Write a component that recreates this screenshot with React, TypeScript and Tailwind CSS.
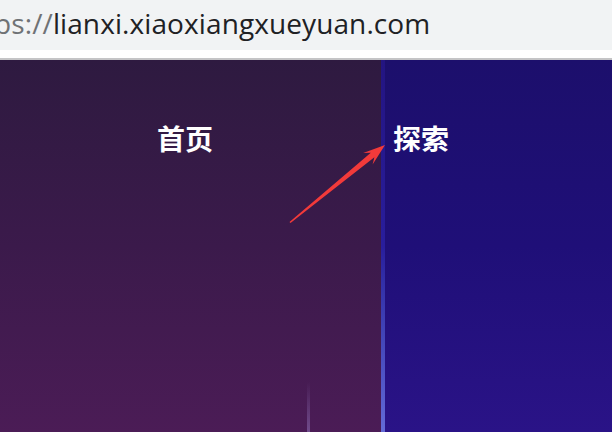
import React from "react";

export default function App() {
  return (
    <div className="w-[612px] h-[432px] overflow-hidden flex flex-col bg-white" style={{ fontFamily: '"Noto Sans", "Noto Sans CJK SC", sans-serif' }}>
      {/* address bar */}
      <div className="h-[50px] bg-[#f1f3f4] flex items-center overflow-hidden shrink-0">
        <div className="ml-[-6px] text-[28px] leading-none whitespace-nowrap tracking-[0.1px] text-[#202124] pb-[5px]" style={{ fontFamily: '"Open Sans", "Noto Sans", sans-serif' }}>
          <span className="text-[#6f7275]">ps://</span>
          <span>lianxi.xiaoxiangxueyuan.com</span>
        </div>
      </div>
      <div className="h-[8px] bg-white shrink-0" />
      <div className="h-[2px] bg-[#c4c4c6] shrink-0" />
      {/* content */}
      <div className="relative flex-1 flex">
        <div className="w-[381px] bg-gradient-to-b from-[#2e1a40] via-[#3b1a4b] to-[#4b1c56] relative">
          <div className="absolute left-[307px] bottom-0 w-[3px] h-[50px] bg-gradient-to-t from-[#8a6cb0] to-transparent opacity-60" />
          <span className="absolute left-[157px] top-[64px] text-white font-bold text-[28px] leading-none" style={{ fontFamily: '"Noto Sans CJK SC", sans-serif' }}>首页</span>
        </div>
        <div className="flex-1 bg-gradient-to-b from-[#1c0f6c] via-[#1f0f78] to-[#2a1387] relative">
          <div className="absolute left-0 top-0 bottom-0 w-[4px] bg-gradient-to-b from-[#241583] via-[#2a1fa0] to-[#6a74e0] opacity-90" />
          <span className="absolute left-[12px] top-[64px] text-white font-bold text-[28px] leading-none" style={{ fontFamily: '"Noto Sans CJK SC", sans-serif' }}>探索</span>
        </div>
        <svg className="absolute left-0 top-0" width="612" height="372" viewBox="0 0 612 372">
          <g transform="translate(0,-60)">
            <polygon points="290.5,223.1 374.4,157.2 372.6,164.6 385,145 363.2,153 370.8,152.8 289.5,221.9" fill="#f23a3a" />
          </g>
        </svg>
      </div>
    </div>
  );
}
